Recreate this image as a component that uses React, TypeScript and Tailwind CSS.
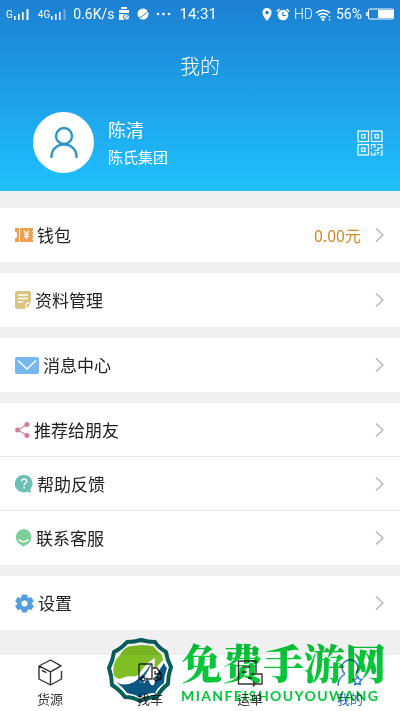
import type { ReactNode } from "react";
import clsx from "clsx";

function Signal({ weak }: { weak?: boolean }) {
  return (
    <svg width="17" height="12" viewBox="0 0 17 12" fill="#fff" aria-hidden="true">
      <rect x="1" y="8" width="1.6" height="4" />
      <rect x="5" y="6" width="1.6" height="6" />
      <rect x="9" y="4" width="1.6" height="8" />
      <rect x="13.5" y="1" width="2" height="11" opacity={weak ? 0.35 : 1} />
    </svg>
  );
}

function StatusBar() {
  return (
    <div className="flex h-7 items-center justify-between px-1.5 font-['Roboto',sans-serif] text-[13px]">
      <div className="flex items-center">
        <span className="text-[10px]">G</span>
        <Signal />
        <span className="ml-2 text-[10px]">4G</span>
        <Signal weak />
        <span className="ml-1.5 text-sm">0.6K/s</span>
        <svg className="ml-1" width="12" height="14" viewBox="0 0 12 14" aria-hidden="true">
          <path d="M3 0h6v2H3zM1 3h10v3H1zM1 7h10v6H1z" fill="#fff" />
          <circle cx="8.5" cy="10" r="3" fill="#fff" stroke="#1d82d4" />
          <path d="m6.5 12 4-4" stroke="#1d82d4" />
        </svg>
        <svg className="ml-1.5" width="14" height="12" viewBox="0 0 14 12" aria-hidden="true">
          <circle cx="7" cy="6" r="5.5" fill="#fff" />
          <path d="M1 10C5 10 10 6 13 1" fill="none" stroke="#1d82d4" />
        </svg>
        <svg className="ml-1.5" width="15" height="4" viewBox="0 0 15 4" fill="#fff" aria-hidden="true">
          <circle cx="2" cy="2" r="1.3" />
          <circle cx="7.5" cy="2" r="1.3" />
          <circle cx="13" cy="2" r="1.3" />
        </svg>
        <span className="ml-2 text-[15px]">14:31</span>
      </div>
      <div className="flex items-center">
        <svg width="10" height="13" viewBox="0 0 10 13" aria-hidden="true">
          <path
            fillRule="evenodd"
            fill="#fff"
            d="M5 0a4.6 4.6 0 0 1 4.6 4.6C9.6 8 5 13 5 13S.4 8 .4 4.6A4.6 4.6 0 0 1 5 0zm0 2.800a1.800 1.800 0 1 0 0 3.600 1.800 1.800 0 0 0 0-3.600z"
          />
        </svg>
        <svg className="ml-1" width="14" height="13" viewBox="0 0 14 13" aria-hidden="true">
          <circle cx="7" cy="7" r="5.3" fill="#fff" />
          <path d="M.8 3.500 3.500 1M13.200 3.500 10.500 1" stroke="#fff" strokeWidth="1.6" />
          <path d="M7 4v3.500h3" fill="none" stroke="#1d82d4" strokeWidth="1.2" />
        </svg>
        <span className="ml-1 text-sm font-light">HD</span>
        <svg className="ml-0.5" width="17" height="13" viewBox="0 0 17 13" fill="none" stroke="#fff" strokeWidth="1.5" aria-hidden="true">
          <path d="M1 5a10 10 0 0 1 14 0M3.200 7.400a7 7 0 0 1 9.600 0M5.400 9.600a4 4 0 0 1 5.200 0" />
          <circle cx="8" cy="11.5" r=".8" fill="#fff" />
          <path d="M14.500 8v1.500M14.500 11v1.500" />
        </svg>
        <span className="ml-1 text-sm">56%</span>
        <svg className="ml-1" width="28" height="12" viewBox="0 0 28 12" aria-hidden="true">
          <path d="M1 4v4" stroke="#fff" strokeWidth="1.5" />
          <rect x="2.5" y="1" width="25" height="10" rx="1" fill="none" stroke="#fff" />
          <rect x="12" y="2" width="15" height="8" fill="#fff" />
        </svg>
      </div>
    </div>
  );
}

function QrIcon() {
  return (
    <svg width="26" height="26" viewBox="0 0 26 26" fill="none" stroke="#fff" strokeWidth="1.2" aria-hidden="true">
      <rect x="1" y="1" width="10.5" height="10.5" />
      <rect x="14.5" y="1" width="10.5" height="10.5" />
      <rect x="1" y="14.5" width="10.5" height="10.5" />
      <rect x="4.5" y="4.5" width="3.5" height="3.5" />
      <rect x="18" y="4.5" width="3.5" height="3.5" />
      <rect x="4.5" y="18" width="3.5" height="3.5" />
      <path d="M14.500 19v-4.500H18v2.500h-1.500M20 14.500h5V18h-4v2.500h-3.500M14.500 21.500V25H18v-2.500M20.500 25v-2.500H23M25 20v5h-2" />
    </svg>
  );
}

function Header() {
  return (
    <header className="bg-linear-to-b from-[#1d80d2] to-[#1fc1fe] pb-[18px] text-white">
      <StatusBar />
      <h1 className="pt-6 text-center text-xl leading-7 font-light">我的</h1>
      <div className="mt-8 flex items-center pr-[17px] pl-[33px]">
        <div className="flex size-[61px] items-center justify-center rounded-full bg-white">
          <svg width="30" height="34" viewBox="0 0 30 34" fill="none" stroke="#2a96cb" strokeWidth="2.4" strokeLinecap="round" aria-hidden="true">
            <circle cx="15" cy="10" r="8" />
            <path d="M2.500 31c0-7.500 5.300-12.500 12.500-12.500S27.500 23.500 27.500 31" />
          </svg>
        </div>
        <div className="ml-3.5 flex-1">
          <p className="text-lg leading-7">陈清</p>
          <p className="text-[15px] leading-7">陈氏集团</p>
        </div>
        <button type="button" aria-label="二维码">
          <QrIcon />
        </button>
      </div>
    </header>
  );
}

const WalletIcon = (
  <svg width="18" height="14" viewBox="0 0 18 14" aria-hidden="true">
    <path d="M0 0h4v14H0v-3.500l2-1.500V5L0 3.500zM5 0h13v2l-1 1 1 1v2l-1 1 1 1v2l-1 1 1 1v2H5z" fill="#eda04f" />
    <path d="m9 3 2.500 3L14 3M11.500 6v5M9 6.500h5M9 8.700h5" fill="none" stroke="#fff" strokeWidth="1.2" />
  </svg>
);

const NoteIcon = (
  <svg width="16" height="18" viewBox="0 0 16 18" aria-hidden="true">
    <path d="M2 0h12a2 2 0 0 1 2 2v9.500h-3.500a2 2 0 0 0-2 2V18H2a2 2 0 0 1-2-2V2a2 2 0 0 1 2-2z" fill="#dac480" />
    <path d="M11.500 17.500v-3.500a1.500 1.500 0 0 1 1.500-1.500h3z" fill="#dac480" />
    <path d="M3 4h10M3 7.500h10M3 11h5" stroke="#fff" strokeWidth="1.3" />
  </svg>
);

const MailIcon = (
  <svg width="24" height="17" viewBox="0 0 24 17" aria-hidden="true">
    <rect width="24" height="17" rx="2" fill="#77b7f1" />
    <path d="m3 3.500 9 8.500 9-8.500" fill="none" stroke="#fff" strokeWidth="1.4" />
  </svg>
);

const ShareIcon = (
  <svg width="15" height="16" viewBox="0 0 15 16" aria-hidden="true">
    <path d="M12 2.500 3 8l9 5.500" fill="none" stroke="#d08a9e" strokeWidth="1.2" />
    <g fill="#cf7f96">
      <circle cx="12" cy="2.6" r="2.5" />
      <circle cx="2.6" cy="8" r="2.5" />
      <circle cx="12" cy="13.4" r="2.5" />
    </g>
  </svg>
);

const HelpIcon = (
  <svg width="18" height="18" viewBox="0 0 18 18" aria-hidden="true">
    <path d="M9 0a8.500 8.500 0 0 1 6.500 14v4l-3-1.600A8.700 8.700 0 1 1 9 0z" fill="#6bc2b3" />
    <path d="M6.500 6.500C6.500 3 11.700 3 11.700 6.200c0 2.200-2.600 2-2.600 4.300" fill="none" stroke="#fff" strokeWidth="1.4" />
    <circle cx="9.1" cy="12.7" r=".9" fill="#fff" />
  </svg>
);

const ServiceIcon = (
  <svg width="17" height="18" viewBox="0 0 17 18" aria-hidden="true">
    <path d="M8.500 0a8.200 8.200 0 0 1 2.300 16L8.500 18l-1.800-2A8.200 8.200 0 0 1 8.500 0z" fill="#7ccf9b" />
    <path d="M3.500 10.500c2.500 3 7.500 3 10 0" fill="none" stroke="#fff" strokeWidth="1.3" />
  </svg>
);

const GearIcon = (
  <svg width="19" height="19" viewBox="0 0 19 19" aria-hidden="true">
    <path
      fillRule="evenodd"
      fill="#519fde"
      stroke="#519fde"
      strokeLinejoin="round"
      d="M7.300 1h4.400l.5 2.500 1.500.9 2.400-.9 2.200 3.800-1.900 1.600v1.400l1.900 1.600-2.200 3.800-2.400-.9-1.500.9-.5 2.300H7.300l-.5-2.300-1.500-.9-2.400.9L.7 11.900l1.900-1.600V8.900L.7 7.300l2.200-3.800 2.400.9 1.500-.9zM9.500 5.900a3.600 3.600 0 1 0 0 7.200 3.600 3.600 0 0 0 0-7.200z"
    />
  </svg>
);

function Row({ icon, label, value }: { icon: ReactNode; label: string; value?: string }) {
  return (
    <button type="button" className="flex h-[54px] w-full items-center bg-white pr-4 pl-[15px] text-left text-[17px] text-[#222]">
      {icon}
      <span className="ml-1 flex-1">{label}</span>
      {value && <span className="mr-3.5 text-base text-[#cf8a2b]">{value}</span>}
      <svg width="9" height="16" viewBox="0 0 9 16" fill="none" stroke="#b5b5b5" strokeWidth="1.5" aria-hidden="true">
        <path d="m1 1.500 7 6.500-7 6.500" />
      </svg>
    </button>
  );
}

const BoxIcon = (
  <path d="M24.500 12v8L13.500 26 2 20V7l11.500-6L24 6.800l-10.500 6L2.500 7.200M13.500 13v13M5 11.500l4.500 2.200" />
);
const TruckIcon = (
  <path d="M2 5h13v15H9M15 9h5l4 6v5h-2M2 5v15h1M16 20h1M18 12v3h5M6 18a2 2 0 1 0 .1 0zM19.500 18a2 2 0 1 0 .1 0z" />
);
const OrderIcon = (
  <path d="M11 25H1.500V2H19v12M5 8h8M5 13h5M14 15h11v10h-8M11 25h7l-2 2.500M18 25l-2-2.500M11 19h4" />
);
const MeIcon = (
  <path d="M8 15a8 8 0 1 1 11-1M1 27c0-6 2.500-9.500 7-12M20.500 17l1.400 2.900 3.100.5-2.200 2.200.5 3.200-2.800-1.500-2.800 1.500.5-3.200-2.200-2.200 3.100-.5z" />
);

const tabs = [
  { label: "货源", icon: BoxIcon },
  { label: "找车", icon: TruckIcon },
  { label: "运单", icon: OrderIcon },
  { label: "我的", icon: MeIcon, active: true },
];

function Emblem() {
  return (
    <svg width="66" height="66" viewBox="-1 -1 66 66" aria-hidden="true">
      <path
        d="M19 3Q26 3 33 1 40 3 47 3 51 9 58 13 59 21 63 28 60 36 60 45 53 50 49 58 40 58 32 62 25 58 17 58 12 51 4 46 4 38 1 29 5 21 6 13 14 9 19 3z"
        fill="#fff"
        stroke="#075f5a"
        strokeWidth="4"
        strokeLinejoin="round"
      />
      <path d="M6 37C4 28 7 20 12 16Q17 7 24 7L34 6 45 7Q49 12 54 16L55 21 46 31 47 19C39 23 35 30 30 36 25 39 22 36 17 38 13 39 12 42 6 37z" fill="#80be26" />
      <path d="M8 43C16 48 26 45 32 38 37 34 41 28 44 23L38 42 44 36 42 45 56 24Q57 27 59 29 56 37 56 44 50 48 47 54 39 54 32 58 25 55 19 54 15 48 8 43z" fill="#0a5784" />
      <path d="M31 45Q41 32 46 20L43 36 54 22Q48 36 46 46 42 47 41 42L39 38 36 45 35 41z" fill="#fff" />
    </svg>
  );
}

function Brand() {
  return (
    <div className="pointer-events-none absolute right-3.5 bottom-[5px] flex items-start gap-2 mix-blend-multiply">
      <Emblem />
      <div className="text-[#05c638]">
        <p className="font-['Noto_Serif_CJK_SC','Noto_Sans_CJK_SC',serif] text-[41px] leading-12 font-black">免费手游网</p>
        <p className="font-['Lato','Liberation_Sans',sans-serif] text-sm leading-5 font-bold tracking-widest">MIANFEISHOUYOUWANG</p>
      </div>
    </div>
  );
}

export default function App() {
  return (
    <div className="flex min-h-screen flex-col bg-[#f0f0f0] font-['Noto_Sans_CJK_SC',sans-serif]">
      <Header />
      <main className="flex flex-1 flex-col gap-[11px] pt-[17px]">
        <Row icon={WalletIcon} label="钱包" value="0.00元" />
        <Row icon={NoteIcon} label="资料管理" />
        <Row icon={MailIcon} label="消息中心" />
        <div className="divide-y divide-[#e6e6e6] bg-white">
          <Row icon={ShareIcon} label="推荐给朋友" />
          <Row icon={HelpIcon} label="帮助反馈" />
          <Row icon={ServiceIcon} label="联系客服" />
        </div>
        <Row icon={GearIcon} label="设置" />
      </main>
      <nav className="relative flex h-14 bg-white">
        {tabs.map((tab) => (
          <button
            key={tab.label}
            type="button"
            className={clsx("flex flex-1 flex-col items-center pt-1 text-[13px] leading-6", tab.active ? "text-[#2873bd]" : "text-[#333]")}
          >
            <svg width="26" height="28" viewBox="0 0 26 28" fill="none" stroke="currentColor" strokeWidth="1.4" strokeLinejoin="round" aria-hidden="true">
              {tab.icon}
            </svg>
            {tab.label}
          </button>
        ))}
        <Brand />
      </nav>
    </div>
  );
}
